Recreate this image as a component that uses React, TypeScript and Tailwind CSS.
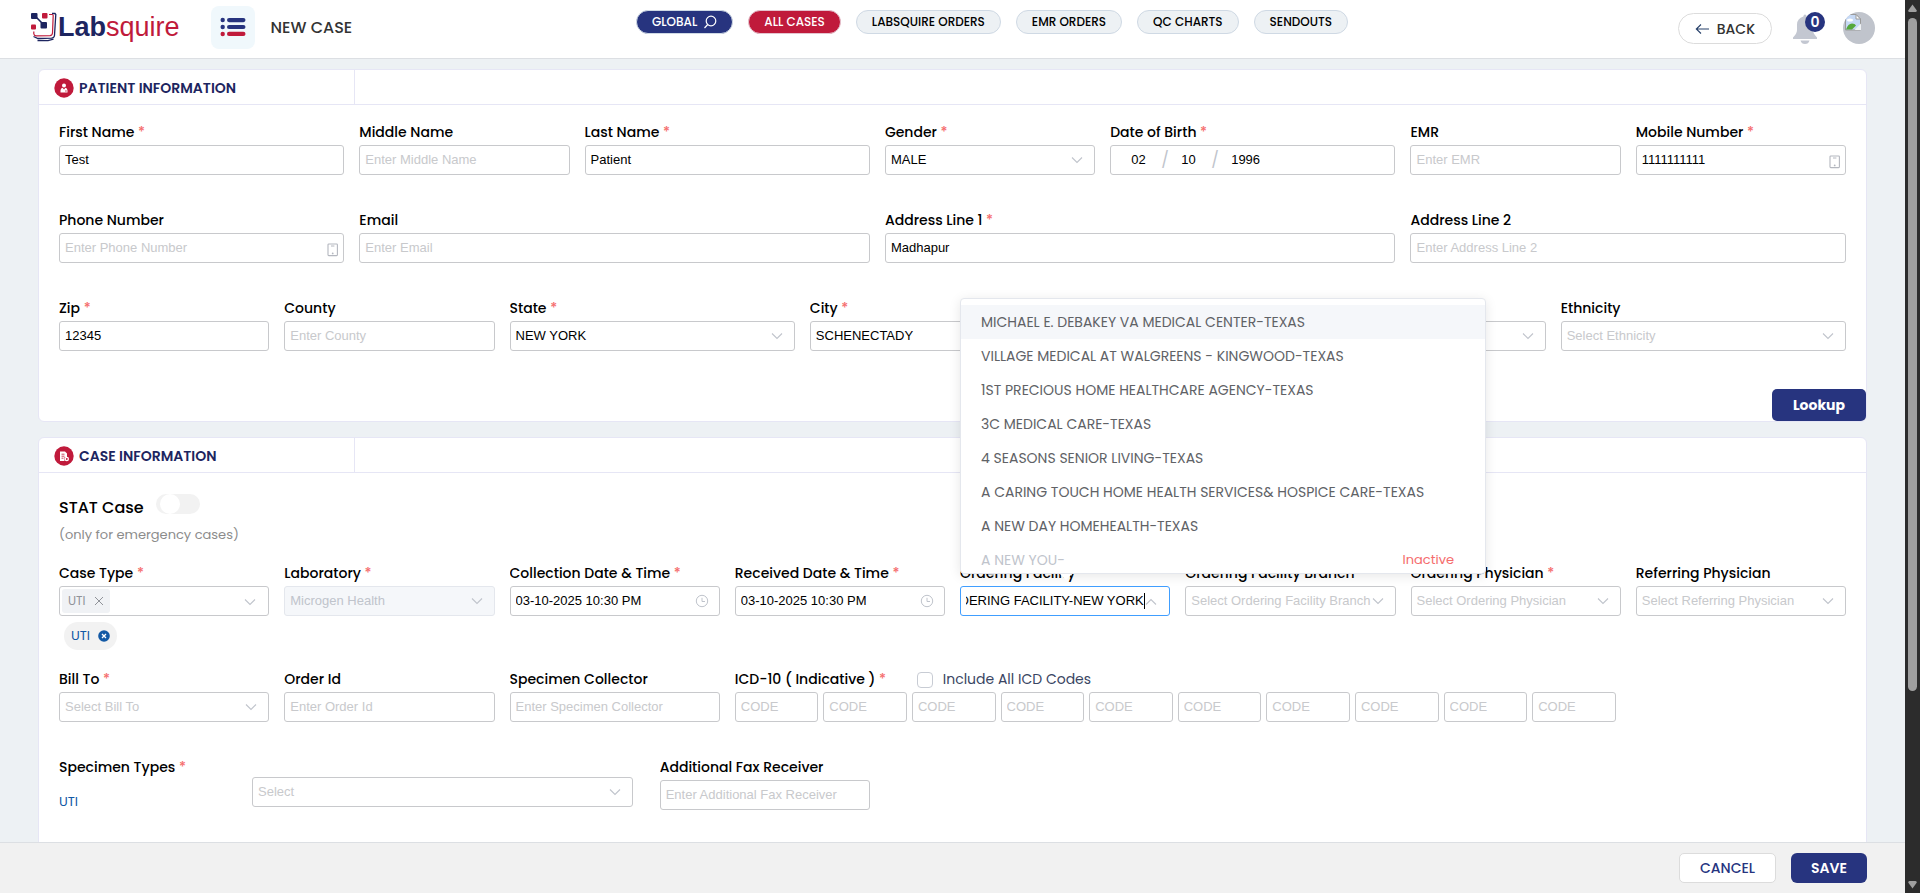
import React, { useEffect, useRef } from "react";

const Chevron = ({ up = false }: { up?: boolean }) => (
  <svg viewBox="0 0 14 14" aria-hidden="true" className="pointer-events-none absolute top-2 right-[11px] h-3.5 w-3.5">
    <path d={up ? "M2 9.5 7 4.5l5 5" : "M2 4.5 7 9.5l5-5"} fill="none" stroke="#c0c4cc" strokeWidth="1.1" />
  </svg>
);

const PhoneIcon = () => (
  <svg viewBox="0 0 14 14" aria-hidden="true" className="pointer-events-none absolute top-2.5 right-1 h-3.5 w-3.5">
    <rect x="2" y="1" width="9.4" height="11.6" rx="0.8" fill="none" stroke="#b4b7bf" strokeWidth="1.1" />
    <path d="M5 3h3.400" stroke="#b4b7bf" strokeWidth="1" />
    <circle cx="6.700" cy="10.400" r="0.9" fill="#b4b7bf" />
  </svg>
);

const ClockIcon = () => (
  <svg viewBox="0 0 14 14" aria-hidden="true" className="pointer-events-none absolute top-2 right-[11px] h-3.5 w-3.5">
    <circle cx="7" cy="7" r="5.700" fill="none" stroke="#c0c4cc" strokeWidth="1" />
    <path d="M7 3.800v3.700h3" fill="none" stroke="#c0c4cc" strokeWidth="1" />
  </svg>
);

const control =
  "block h-[30px] w-full min-w-0 rounded-[3px] border border-[#c8c9cc] bg-white px-[5px] font-['Liberation_Sans',sans-serif] text-[13px] text-black outline-none placeholder:text-[#c8c9cc]";

const textControl = `${control} pb-0.5`;

const spans: Record<number, string> = {
  3: "col-span-3",
  4: "col-span-4",
  6: "col-span-6",
  7: "col-span-7",
};

const Star = () => <span className="text-[#f56c6c]"> *</span>;

type FieldProps = {
  id: string;
  label: string;
  span: number;
  required?: boolean;
  children: React.ReactNode;
};

const Field = ({ id, label, span, required, children }: FieldProps) => (
  <div className={`relative min-w-0 ${spans[span]}`}>
    <label htmlFor={id} className="mb-0.5 block truncate text-sm leading-[21px] font-medium text-black">
      {label}
      {required && <Star />}
    </label>
    {children}
  </div>
);

type InputProps = {
  id: string;
  label: string;
  span: number;
  required?: boolean;
  value?: string;
  placeholder?: string;
  icon?: React.ReactNode;
};

const TextField = ({ value, placeholder, icon, ...rest }: InputProps) => (
  <Field {...rest}>
    <div className="relative">
      <input id={rest.id} type="text" defaultValue={value} placeholder={placeholder} className={textControl} />
      {icon}
    </div>
  </Field>
);

type SelectProps = { id: string; value?: string; placeholder?: string; disabled?: boolean };

const Select = ({ id, value, placeholder, disabled }: SelectProps) => (
  <div className="relative">
    <select
      id={id}
      disabled={disabled}
      className={`appearance-none pr-6 ${control} ${
        disabled ? "border-[#e4e7ed]! bg-[#f5f7fa]! text-[#c0c4cc]!" : value ? "" : "text-[#c8c9cc]!"
      }`}
    >
      <option>{value ?? placeholder}</option>
    </select>
    <Chevron />
  </div>
);

const SelectField = ({ value, placeholder, disabled, ...rest }: InputProps & { disabled?: boolean }) => (
  <Field {...rest}>
    <Select id={rest.id} value={value} placeholder={placeholder} disabled={disabled} />
  </Field>
);

const facilities = [
  "MICHAEL E. DEBAKEY VA MEDICAL CENTER-TEXAS",
  "VILLAGE MEDICAL AT WALGREENS - KINGWOOD-TEXAS",
  "1ST PRECIOUS HOME HEALTHCARE AGENCY-TEXAS",
  "3C MEDICAL CARE-TEXAS",
  "4 SEASONS SENIOR LIVING-TEXAS",
  "A CARING TOUCH HOME HEALTH SERVICES& HOSPICE CARE-TEXAS",
  "A NEW DAY HOMEHEALTH-TEXAS",
];

const FacilityField = () => {
  const ref = useRef<HTMLInputElement>(null);
  useEffect(() => {
    if (ref.current) ref.current.scrollLeft = ref.current.scrollWidth;
  }, []);
  return (
    <Field id="facility" label="Ordering Facility" span={3} required>
      <div className="relative flex h-[30px] items-center rounded-[3px] border border-[#409eff] bg-white pr-[24px] pl-[5px]">
        <input
          ref={ref}
          id="facility"
          role="combobox"
          aria-expanded="true"
          aria-controls="facility-list"
          defaultValue="ORDERING FACILITY-NEW YORK"
          className="min-w-0 flex-1 font-['Liberation_Sans',sans-serif] text-[13px] text-black outline-none"
        />
        <span className="h-4 w-px bg-black" />
        <Chevron up />
      </div>
      <div className="absolute bottom-[42px] left-0 z-20 w-[526px]">
        <ul
          id="facility-list"
          role="listbox"
          className="h-[276px] overflow-hidden rounded border border-[#e4e7ed] bg-white pt-1.5 text-sm leading-[34px] text-[#606266] shadow-[0_2px_12px_rgba(0,0,0,0.1)]"
        >
          {facilities.map((name, i) => (
            <li
              key={name}
              role="option"
              aria-selected={i === 0}
              className={`truncate px-5 ${i === 0 ? "bg-[#f5f7fa]" : ""}`}
            >
              {name}
            </li>
          ))}
          <li
            role="option"
            aria-selected={false}
            aria-disabled="true"
            className="flex justify-between pr-[31px] pl-5 text-[#c0c4cc]"
          >
            <span>A NEW YOU-</span>
            <span className="text-[13px] text-[#f56c6c]">Inactive</span>
          </li>
        </ul>
        <svg viewBox="0 0 12 6" aria-hidden="true" className="absolute top-full left-[100px] h-1.5 w-3">
          <path d="M0 0h12L6 6z" fill="#fff" />
        </svg>
      </div>
    </Field>
  );
};

const Card = ({ title, icon, children }: { title: string; icon: React.ReactNode; children: React.ReactNode }) => (
  <section className="mx-[38px] rounded-md border border-[#e6e6f5] bg-white">
    <div className="flex border-b border-[#e6e6f5]">
      <h2 className="flex h-[34px] w-[316px] items-center gap-[5px] border-r border-[#e6e6f5] pt-0.5 pl-[15px] text-sm font-semibold text-[#1d2560]">
        {icon}
        {title}
      </h2>
    </div>
    {children}
  </section>
);

const Header = () => (
  <header className="flex h-[59px] shrink-0 items-start border-b border-[#dcdfe3] bg-white px-[30px]">
    <div className="flex w-[606px] items-center">
      <a
        href="#home"
        className="flex h-[54px] items-center font-['Liberation_Sans',sans-serif] text-[27px] leading-none"
        aria-label="Labsquire"
      >
        <svg viewBox="0 0 28 30" aria-hidden="true" className="h-[30px] w-7">
          <path d="M5 4 14 13" stroke="#1d2560" strokeWidth="1.6" />
          <rect x="1" y="1" width="6.500" height="6" rx="1" fill="#1d2560" />
          <rect x="12" y="1" width="5.500" height="5.500" rx="1" fill="#c01a3b" />
          <rect x="1" y="12.500" width="5" height="5" rx="1" fill="#c01a3b" />
          <rect x="10.500" y="10" width="6.500" height="6.500" rx="1" fill="#1d2560" />
          <path
            d="M19 2.500h3.200q1 0 1 1l-.700 17.500q-.200 2.500-2.500 2.600L6 23.800q-2 0-2.200-2V19.500"
            fill="none"
            stroke="#c01a3b"
            strokeWidth="1.200"
          />
          <path
            d="M22 1.500h3l.800 1-1.300 21q-.300 2.500-3 2.700L8 26.500l-4.500-2"
            fill="none"
            stroke="#1d2560"
            strokeWidth="1.300"
          />
          <path d="M7.500 28.500 18 28.700l5.500-1.500" fill="none" stroke="#1d2560" strokeWidth="1.300" />
        </svg>
        <span className="font-bold text-[#1d2560]">Lab</span>
        <span className="text-[#c01a3b]">squire</span>
      </a>
      <button
        type="button"
        aria-label="Menu"
        className="ml-[31px] flex h-[43px] w-11 items-center justify-center rounded-lg bg-[#f0f8fc]"
      >
        <svg viewBox="0 0 26 20" aria-hidden="true" className="h-5 w-[26px]">
          <g fill="#27347f">
            <circle cx="2.700" cy="3" r="2.200" />
            <rect x="7" y="1" width="18.500" height="4.200" rx="2.100" />
            <circle cx="2.700" cy="10" r="2.200" />
            <rect x="7" y="7.900" width="18.500" height="4.200" rx="2.100" />
          </g>
          <g fill="#c01a3b">
            <circle cx="2.700" cy="17" r="2.200" />
            <rect x="7" y="14.800" width="18.500" height="4.200" rx="2.100" />
          </g>
        </svg>
      </button>
      <h1 className="ml-4 pt-0.5 text-base font-medium text-[#333]">NEW CASE</h1>
    </div>
    <nav className="mt-2.5 flex gap-[15px] text-xs font-medium whitespace-nowrap">
      <button
        type="button"
        className="flex h-6 items-center gap-1.5 rounded-full border border-[#cfd9e4] bg-[#27347f] px-[15px] text-white"
      >
        GLOBAL
        <svg viewBox="0 0 14 14" aria-hidden="true" className="h-3.5 w-3.5">
          <circle cx="8" cy="6" r="4.800" fill="none" stroke="#fff" strokeWidth="1.200" />
          <path d="M4.700 9.500 1.500 13" stroke="#fff" strokeWidth="1.200" />
        </svg>
      </button>
      <button type="button" className="h-6 rounded-full border border-[#e4c4cf] bg-[#c01a3b] px-[15px] text-white">
        ALL CASES
      </button>
      {["LABSQUIRE ORDERS", "EMR ORDERS", "QC CHARTS", "SENDOUTS"].map((t) => (
        <button
          key={t}
          type="button"
          className="h-6 rounded-full border border-[#cfd9e4] bg-[#edf1f4] px-[15px] text-black"
        >
          {t}
        </button>
      ))}
    </nav>
    <div className="flex flex-1 justify-end pt-3">
      <button
        type="button"
        className="mt-px mr-[21px] flex h-[31px] items-center gap-2 rounded-full border border-[#dcdcdc] bg-white px-4 text-sm font-medium text-[#333]"
      >
        <svg viewBox="0 0 14 12" aria-hidden="true" className="h-3 w-3.5">
          <path d="M14 6H1.500M6 1.500 1.300 6 6 10.500" fill="none" stroke="#27406a" strokeWidth="1.100" />
        </svg>
        BACK
      </button>
      <button type="button" aria-label="Notifications" className="relative mr-[26px] h-8 w-6">
        <svg viewBox="0 0 24 32" aria-hidden="true" className="h-8 w-6">
          <path
            d="M12 2.500q1.500 0 1.600 2 6.200 1.800 6.400 8v5.500q0 3.500 4 7.500v1.500H0v-1.500q4-4 4-7.500v-5.500q.200-6.200 6.400-8 .100-2 1.600-2zM7.500 28.500h9q-1 3.500-4.500 3.500t-4.500-3.500z"
            fill="#c3c7d1"
          />
        </svg>
        <span className="absolute top-0 left-3 flex h-5 w-5 items-center justify-center rounded-full bg-[#27347f] text-sm leading-none font-semibold text-white">
          0
        </span>
      </button>
      <button type="button" aria-label="Profile" className="h-8 w-8 overflow-hidden rounded-full bg-[#c0c4cc]">
        <svg viewBox="0 0 32 32" aria-hidden="true" className="h-8 w-8">
          <path d="M2.500 2.500h10.500l4.500 4.500v11h-15z" fill="#c6d9f5" stroke="#9a9a9a" />
          <path d="M13 2.500v4.500h4.500z" fill="#fff" stroke="#9a9a9a" />
          <ellipse cx="7" cy="8" rx="3" ry="1.600" fill="#fff" />
          <path d="M3 17.500q2-6 6-6 3 0 4 2l-4 4z" fill="#55a83c" />
          <path d="M11.500 18 18 11.500V18z" fill="#eef2f5" />
        </svg>
      </button>
    </div>
  </header>
);

const PatientBadge = () => (
  <svg viewBox="0 0 20 20" aria-hidden="true" className="h-5 w-5">
    <circle cx="10" cy="10" r="9.700" fill="#c01a3b" />
    <circle cx="10" cy="7.400" r="2" fill="#fff" />
    <path d="M6.500 14.500q-.300-4.300 2-4.700L10 11.500l1.500-1.700q2.300.400 2 4.700z" fill="#fff" />
    <path d="M11 13h1.800" stroke="#c01a3b" strokeWidth=".800" />
  </svg>
);

const CaseBadge = () => (
  <svg viewBox="0 0 20 20" aria-hidden="true" className="h-5 w-5">
    <circle cx="10" cy="10" r="9.700" fill="#c01a3b" />
    <path d="M6 5.500h5l2 2V11h-2.500v4H6z" fill="#fff" />
    <path d="M7.500 8.200h3M7.500 10.200h3M7.500 12.200h2" stroke="#c01a3b" strokeWidth=".800" />
    <circle cx="12.800" cy="13" r="2.200" fill="#fff" />
    <circle cx="12.800" cy="13" r=".900" fill="#c01a3b" />
  </svg>
);

const grid = "grid grid-cols-24 gap-x-[15px] gap-y-[35px]";

const Slash = () => <span className="w-5 font-['Poppins','Inter',sans-serif] text-base text-[#c0c4cc]">/</span>;

const PatientCard = () => (
  <Card title="PATIENT INFORMATION" icon={<PatientBadge />}>
    <div className={`px-5 pt-[17px] pb-[38px] ${grid}`}>
      <TextField id="first" label="First Name" span={4} required value="Test" />
      <TextField id="middle" label="Middle Name" span={3} placeholder="Enter Middle Name" />
      <TextField id="last" label="Last Name" span={4} required value="Patient" />
      <SelectField id="gender" label="Gender" span={3} required value="MALE" />
      <Field id="dob-month" label="Date of Birth" span={4} required>
        <div className={`${control} flex! items-center pl-5!`}>
          <input id="dob-month" aria-label="Month" defaultValue="02" className="w-[30px] outline-none" />
          <Slash />
          <input aria-label="Day" defaultValue="10" className="w-[30px] outline-none" />
          <Slash />
          <input aria-label="Year" defaultValue="1996" className="w-10 outline-none" />
        </div>
      </Field>
      <TextField id="emr" label="EMR" span={3} placeholder="Enter EMR" />
      <TextField id="mobile" label="Mobile Number" span={3} required value="1111111111" icon={<PhoneIcon />} />

      <TextField id="phone" label="Phone Number" span={4} placeholder="Enter Phone Number" icon={<PhoneIcon />} />
      <TextField id="email" label="Email" span={7} placeholder="Enter Email" />
      <TextField id="addr1" label="Address Line 1" span={7} required value="Madhapur" />
      <TextField id="addr2" label="Address Line 2" span={6} placeholder="Enter Address Line 2" />

      <TextField id="zip" label="Zip" span={3} required value="12345" />
      <TextField id="county" label="County" span={3} placeholder="Enter County" />
      <SelectField id="state" label="State" span={4} required value="NEW YORK" />
      <SelectField id="city" label="City" span={3} required value="SCHENECTADY" />
      <SelectField id="country" label="Country" span={3} />
      <SelectField id="race" label="Race" span={4} />
      <SelectField id="ethnicity" label="Ethnicity" span={4} placeholder="Select Ethnicity" />
    </div>
    <div className="flex justify-end">
      <button type="button" className="h-8 rounded-[5px] bg-[#27347f] px-[21px] text-sm font-bold text-white">
        Lookup
      </button>
    </div>
  </Card>
);

const CaseCard = () => (
  <Card title="CASE INFORMATION" icon={<CaseBadge />}>
    <div className="px-5 pt-[21px] pb-[60px]">
      <div className="flex items-start gap-3">
        <label htmlFor="stat" className="text-base leading-7 font-medium text-black">
          STAT Case
        </label>
        <input
          id="stat"
          type="checkbox"
          role="switch"
          className="flex h-5 w-11 appearance-none items-center rounded-full bg-[#f2f2f2] pl-1 before:block before:h-5 before:w-5 before:rounded-full before:bg-white before:content-['']"
        />
      </div>
      <p className="mt-0.5 text-[13px] leading-[21px] text-[#8c8c8c]">(only for emergency cases)</p>

      <div className={`mt-[18px] ${grid}`}>
        <Field id="case-type" label="Case Type" span={3} required>
          <div className="relative flex h-[30px] items-center rounded-[3px] border border-[#c8c9cc] bg-white px-0.5">
            <span className="flex h-6 items-center gap-2 rounded-[3px] bg-[#f0f2f5] px-1.5 text-xs text-[#909399]">
              UTI
              <button type="button" aria-label="Remove UTI">
                <svg viewBox="0 0 10 10" aria-hidden="true" className="h-2.5 w-2.5">
                  <path d="m1 1 8 8M9 1 1 9" stroke="#909399" />
                </svg>
              </button>
            </span>
            <input id="case-type" className="min-w-0 flex-1 outline-none" />
            <Chevron />
          </div>
          <span className="mt-1.5 ml-[5px] inline-flex h-7 items-center gap-2 rounded-full bg-[#f2f2f2] px-[7px] align-top text-[13px] text-[#1259a5]">
            UTI
            <button type="button" aria-label="Clear UTI">
              <svg viewBox="0 0 12 12" aria-hidden="true" className="h-3 w-3">
                <circle cx="6" cy="6" r="5.800" fill="#1259a5" />
                <path d="m4 4 4 4M8 4 4 8" stroke="#fff" strokeWidth="1.300" />
              </svg>
            </button>
          </span>
        </Field>
        <SelectField id="lab" label="Laboratory" span={3} required value="Microgen Health" disabled />
        <TextField
          id="collected"
          label="Collection Date & Time"
          span={3}
          required
          value="03-10-2025 10:30 PM"
          icon={<ClockIcon />}
        />
        <TextField
          id="received"
          label="Received Date & Time"
          span={3}
          required
          value="03-10-2025 10:30 PM"
          icon={<ClockIcon />}
        />
        <div className="col-span-3 h-[53px]">
          <FacilityField />
        </div>
        <SelectField
          id="branch"
          label="Ordering Facility Branch"
          span={3}
          placeholder="Select Ordering Facility Branch"
        />
        <SelectField
          id="physician"
          label="Ordering Physician"
          span={3}
          required
          placeholder="Select Ordering Physician"
        />
        <SelectField id="referring" label="Referring Physician" span={3} placeholder="Select Referring Physician" />
      </div>

      <div className={`mt-[19px] ${grid}`}>
        <SelectField id="bill" label="Bill To" span={3} required placeholder="Select Bill To" />
        <TextField id="order" label="Order Id" span={3} placeholder="Enter Order Id" />
        <TextField id="collector" label="Specimen Collector" span={3} placeholder="Enter Specimen Collector" />
        <div className="col-span-12 pr-[5px]">
          <div className="mb-0.5 flex h-[21px] items-center">
            <label htmlFor="icd-0" className="w-[182px] text-sm leading-[21px] font-medium text-black">
              ICD-10 ( Indicative )
              <Star />
            </label>
            <input
              id="all-icd"
              type="checkbox"
              className="h-4 w-4 appearance-none rounded border border-[#c8ccd4] bg-white"
            />
            <label htmlFor="all-icd" className="pl-2.5 text-sm leading-[21px] text-[#3a4663]">
              Include All ICD Codes
            </label>
          </div>
          <div className="grid grid-cols-10 gap-[5px]">
            {Array.from({ length: 10 }, (_, i) => (
              <input
                key={i}
                id={`icd-${i}`}
                aria-label={`ICD code ${i + 1}`}
                placeholder="CODE"
                className={textControl}
              />
            ))}
          </div>
        </div>
      </div>

      <div className={`mt-[35px] ${grid}`}>
        <div className="col-span-8 flex pr-3">
          <div className="w-[193px] shrink-0">
            <label htmlFor="specimen" className="block text-sm leading-[21px] font-medium text-black">
              Specimen Types
              <Star />
            </label>
            <p className="mt-[13px] text-[13px] leading-[21px] text-[#1259a5]">UTI</p>
          </div>
          <div className="flex-1 pt-5">
            <Select id="specimen" placeholder="Select" />
          </div>
        </div>
        <TextField id="fax" label="Additional Fax Receiver" span={3} placeholder="Enter Additional Fax Receiver" />
      </div>
    </div>
  </Card>
);

const Scrollbar = () => (
  <div aria-hidden="true" className="flex w-[15px] shrink-0 flex-col items-center bg-[#2c2c2c] py-1">
    <svg viewBox="0 0 9 8" className="h-2 w-[9px]">
      <path d="M4.500 0.500 8.800 6.500Q8.800 8 7.500 8h-6Q.200 8 .200 6.500z" fill="#9f9f9f" />
    </svg>
    <div className="mt-1.5 flex-1 self-stretch px-[3px]">
      <div className="h-[78%] rounded-full bg-[#9f9f9f]" />
    </div>
    <svg viewBox="0 0 9 8" className="h-2 w-[9px]">
      <path d="M4.500 7.500 8.800 1.500Q8.800 0 7.500 0h-6Q.200 0 .200 1.500z" fill="#9f9f9f" />
    </svg>
  </div>
);

export default function App() {
  return (
    <div className="flex h-screen bg-[#edf1f4] font-['Poppins','Inter',sans-serif]">
      <div className="flex min-w-0 flex-1 flex-col">
        <Header />
        <main className="flex min-h-0 flex-1 flex-col gap-[15px] overflow-hidden pt-2.5">
          <PatientCard />
          <CaseCard />
        </main>
        <footer className="flex h-[51px] shrink-0 items-center justify-end gap-[15px] border-t border-[#dcdfe3] bg-[#f1f1f1] pr-[38px]">
          <button
            type="button"
            className="h-[30px] rounded-[5px] border border-[#dcdcdc] bg-white px-5 text-sm font-medium text-[#27347f]"
          >
            CANCEL
          </button>
          <button type="button" className="h-[30px] rounded-md bg-[#27347f] px-5 text-sm font-semibold text-white">
            SAVE
          </button>
        </footer>
      </div>
      <Scrollbar />
    </div>
  );
}
